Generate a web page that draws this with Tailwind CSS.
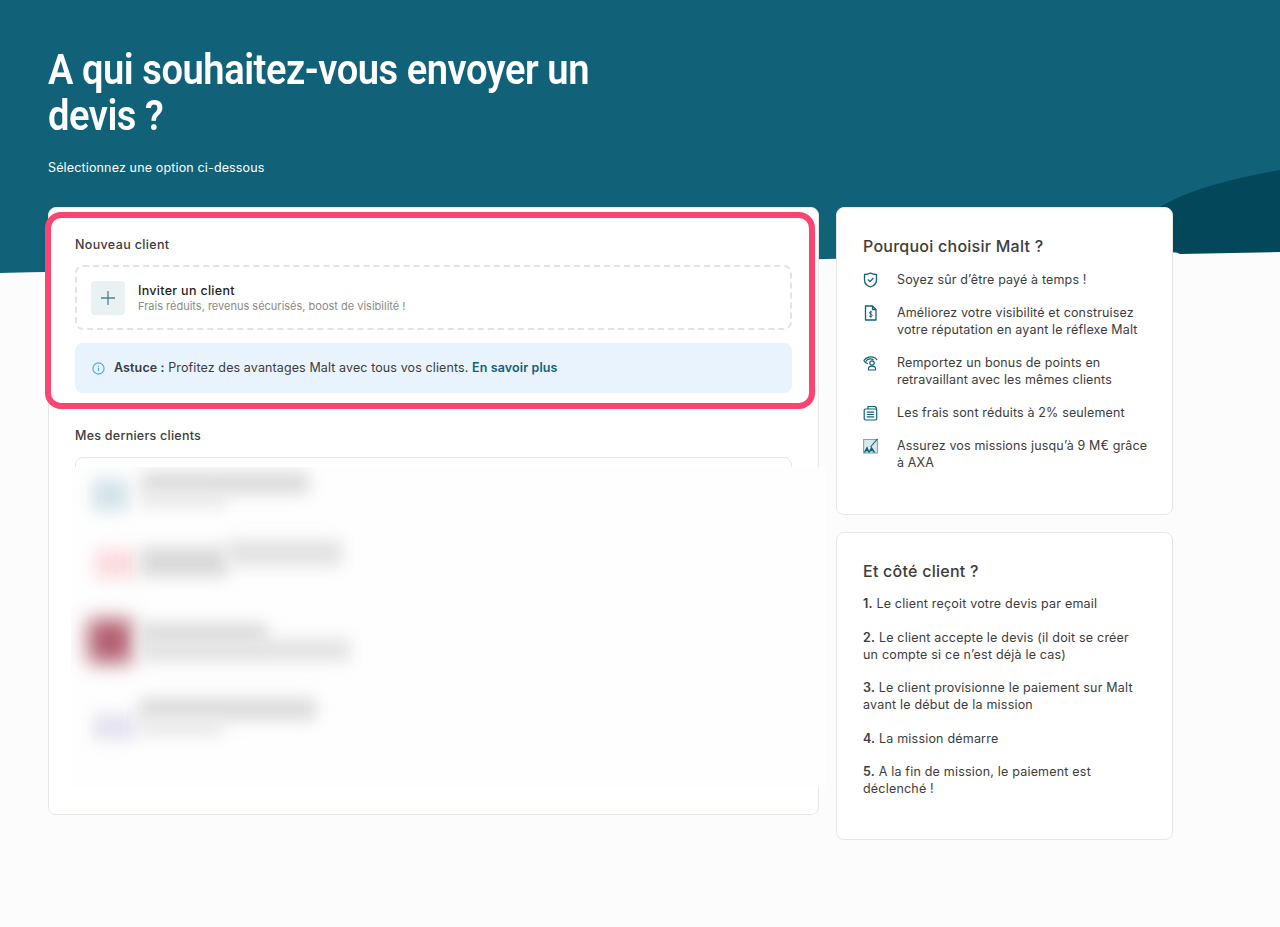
<!DOCTYPE html>
<html lang="fr">
<head>
  <meta charset="UTF-8" />
  <title>Nouveau devis</title>
  <script src="https://cdn.jsdelivr.net/npm/@tailwindcss/browser@4"></script>
</head>
<body class="bg-[#fcfcfc] text-[#3c3c3b] font-['Inter',sans-serif] min-h-[927px] overflow-hidden">
  <div class="relative h-[927px]">
    <!-- hero background -->
    <svg class="absolute top-0 left-0" width="1280" height="280" viewBox="0 0 1280 280">
      <path d="M0 0H1280V252C1100 252 900 257 700 262C450 267 200 268 0 273Z" fill="#116278" />
      <path d="M1150 214C1178 192 1225 180 1280 170V252L1180 254L1150 240Z" fill="#03485a" />
    </svg>

    <div class="relative pl-12 pt-[47px]">
      <h1 class="w-[640px] origin-left scale-x-[0.907] text-white text-[42px] leading-[46px] font-semibold tracking-[-0.5px] font-['Roboto',sans-serif]">A qui souhaitez-vous envoyer un<br />devis ?</h1>
      <p class="mt-[20px] text-white text-[12.5px] leading-[18px] tracking-[0.15px]">Sélectionnez une option ci-dessous</p>

      <div class="flex gap-[17px] mt-[30px] items-start">
        <!-- left card -->
        <section class="relative w-[771px] h-[608px] bg-white border border-[#e8e8e3] rounded-lg px-[26px] pt-[28px]">
          <h2 class="text-[12.5px] leading-[18px] font-medium tracking-[0.35px]">Nouveau client</h2>
          <div class="mt-[11px] h-[65px] border-2 border-dashed border-[#e4e4de] rounded-lg flex items-center gap-[13px] px-[14px]">
            <div class="w-[34px] h-[34px] rounded bg-[#e9f1f3] flex items-center justify-center">
              <svg width="16" height="16" viewBox="0 0 16 16" fill="none" stroke="#4d8290" stroke-width="1.3"><path d="M8 1v14M1 8h14" /></svg>
            </div>
            <div>
              <p class="text-[12.5px] leading-[16px] font-medium text-[#1f1f1e] tracking-[0.3px]">Inviter un client</p>
              <p class="text-[11px] leading-[14px] text-[#8a8a86]">Frais réduits, revenus sécurisés, boost de visibilité !</p>
            </div>
          </div>
          <div class="mt-[13px] h-[50px] bg-[#e9f3fd] rounded-lg flex items-center pl-[17px] pt-[1px]">
            <svg width="13" height="13" viewBox="0 0 14 14" fill="none" stroke="#4aa3f0" stroke-width="1.2"><circle cx="7" cy="7" r="6" /><path d="M7 6.2v3.6M7 4v1" /></svg>
            <p class="ml-[9px] text-[12.5px] tracking-[0.11px]"><b class="font-semibold">Astuce :</b> Profitez des avantages Malt avec tous vos clients. <a class="font-semibold text-[#116278]">En savoir plus</a></p>
          </div>

          <h2 class="mt-[34px] text-[12.5px] leading-[18px] font-medium tracking-[0.25px]">Mes derniers clients</h2>
          <div class="mt-[12px] h-[60px] border border-[#e8e8e3] rounded-lg"></div>

          <!-- blurred list of clients, covers the list border -->
          <div class="absolute left-[22px] top-[259px] w-[756px] h-[320px] bg-[#fefefe] overflow-hidden">
            <div class="absolute left-[21px] top-[12px] w-[36px] h-[32px] bg-[#d3e3ea] blur-[8px]"></div>
            <div class="absolute left-[70px] top-[5px] w-[168px] h-[22px] bg-[#dbdbdb] blur-[8px]"></div>
            <div class="absolute left-[70px] top-[26px] w-[85px] h-[14px] bg-[#e8e8e8] blur-[8px]"></div>

            <div class="absolute left-[24px] top-[82px] w-[42px] h-[30px] bg-[#fbdcdf] blur-[8px]"></div>
            <div class="absolute left-[70px] top-[80px] w-[86px] h-[30px] bg-[#d9d9d9] blur-[8px]"></div>
            <div class="absolute left-[156px] top-[73px] w-[115px] h-[26px] bg-[#e2e2e2] blur-[8px]"></div>

            <div class="absolute left-[17px] top-[152px] w-[44px] h-[44px] bg-[#b25f6f] blur-[10px]"></div>
            <div class="absolute left-[70px] top-[156px] w-[126px] h-[22px] bg-[#dbdbdb] blur-[8px]"></div>
            <div class="absolute left-[70px] top-[172px] w-[209px] h-[22px] bg-[#e2e2e2] blur-[8px]"></div>

            <div class="absolute left-[22px] top-[247px] w-[42px] h-[26px] bg-[#e4e2f0] blur-[8px]"></div>
            <div class="absolute left-[68px] top-[231px] w-[177px] h-[22px] bg-[#dbdbdb] blur-[8px]"></div>
            <div class="absolute left-[68px] top-[252px] w-[84px] h-[16px] bg-[#e8e8e8] blur-[8px]"></div>
          </div>
        </section>

        <!-- right column -->
        <aside class="w-[337px] flex flex-col gap-[17px]">
          <section class="h-[308px] bg-white border border-[#e8e8e3] rounded-lg pl-[26px] pr-[20px] pt-[28px]">
            <h2 class="text-[16px] leading-[20px] font-medium tracking-[0.25px]">Pourquoi choisir Malt ?</h2>
            <ul class="mt-[15px] flex flex-col gap-[16.1px] text-[12.5px] leading-[17px] tracking-[0.15px]">
              <li class="flex gap-[19px]">
                <svg class="shrink-0 mt-[1px]" width="15" height="16" viewBox="0 0 15 16" fill="none" stroke="#116278" stroke-width="1.3" stroke-linejoin="round"><path d="M1.5 2.5C4 2.5 6 2 7.5 1C9 2 11 2.5 13.5 2.5V8C13.5 11.5 10.5 14 7.5 15C4.5 14 1.5 11.5 1.5 8Z" /><path d="M4.8 7.5L7 9.6L10.4 6" /></svg>
                <span>Soyez sûr d’être payé à temps !</span>
              </li>
              <li class="flex gap-[19px]">
                <svg class="shrink-0 mt-[1px]" width="15" height="16" viewBox="0 0 15 16" fill="none" stroke="#116278" stroke-width="1.3" stroke-linejoin="round"><path d="M2.5 1H9.5L13 4.5V15H2.5Z" /><path d="M9.5 1V4.5H13" /><path d="M9.2 7.2C8 6.4 6.3 6.8 6.5 8.1C6.7 9.3 9.3 9 9.3 10.5C9.3 11.7 7.5 12 6.2 11.1M7.8 5.8V12.8" stroke-width="1" /></svg>
                <span>Améliorez votre visibilité et construisez votre réputation en ayant le réflexe Malt</span>
              </li>
              <li class="flex gap-[19px]">
                <svg class="shrink-0 mt-[1px]" width="15" height="16" viewBox="0 0 15 16" fill="none" stroke="#116278" stroke-width="1.2"><path d="M0.8 5.5C3 2 8 0.6 12.5 3.2L14 5M2.8 6.5C4 4.3 7 3.2 10.5 4.6M0.8 5.5C1.5 7 3 8.2 4.8 8.8" /><circle cx="9" cy="8" r="2.2" /><path d="M5.5 15V13.6C5.5 12 7 11.2 9 11.2C11 11.2 12.5 12 12.5 13.6V15Z" /></svg>
                <span>Remportez un bonus de points en retravaillant avec les mêmes clients</span>
              </li>
              <li class="flex gap-[19px]">
                <svg class="shrink-0 mt-[1px]" width="15" height="16" viewBox="0 0 15 16" fill="none" stroke="#116278" stroke-width="1.2"><path d="M5 4V1.5H12L13.5 3V4.5" /><rect x="1.2" y="4" width="12.5" height="11" rx="1.2" /><path d="M3.8 7.2H11.2M3.8 9.5H11.2M3.8 11.8H11.2" /></svg>
                <span>Les frais sont réduits à 2% seulement</span>
              </li>
              <li class="flex gap-[19px]">
                <svg class="shrink-0 mt-[1px]" width="15" height="16" viewBox="0 0 15 16" fill="none" stroke="#116278" stroke-width="1.1"><rect x="0.6" y="1.5" width="13.8" height="13.5" fill="#dbe9ee" stroke="#7fa9b5" /><path d="M14.5 0.8L7.5 9" stroke="#116278" /><path d="M1.5 14.5L4 9.8L6 14.5M6 14.5L8.5 9.8L11.5 14.5M2.5 12.5H5M7 12.5H10.5" stroke-width="1.4" /></svg>
                <span>Assurez vos missions jusqu’à 9 M€ grâce à AXA</span>
              </li>
            </ul>
          </section>

          <section class="h-[308px] bg-white border border-[#e8e8e3] rounded-lg px-[26px] pt-[28px]">
            <h2 class="text-[16px] leading-[20px] font-medium tracking-[0.25px]">Et côté client ?</h2>
            <ol class="mt-[14px] w-[278px] flex flex-col gap-[16.5px] text-[12.5px] leading-[17px] tracking-[0.2px]">
              <li><b class="font-semibold">1.</b> Le client reçoit votre devis par email</li>
              <li><b class="font-semibold">2.</b> Le client accepte le devis (il doit se créer un compte si ce n’est déjà le cas)</li>
              <li><b class="font-semibold">3.</b> Le client provisionne le paiement sur Malt avant le début de la mission</li>
              <li><b class="font-semibold">4.</b> La mission démarre</li>
              <li><b class="font-semibold">5.</b> A la fin de mission, le paiement est déclenché !</li>
            </ol>
          </section>
        </aside>
      </div>
    </div>

    <!-- highlight frame -->
    <div class="absolute left-[45px] top-[212px] w-[770px] h-[197px] border-[6px] border-[#fb4570] rounded-[16px]"></div>
  </div>
</body>
</html>
